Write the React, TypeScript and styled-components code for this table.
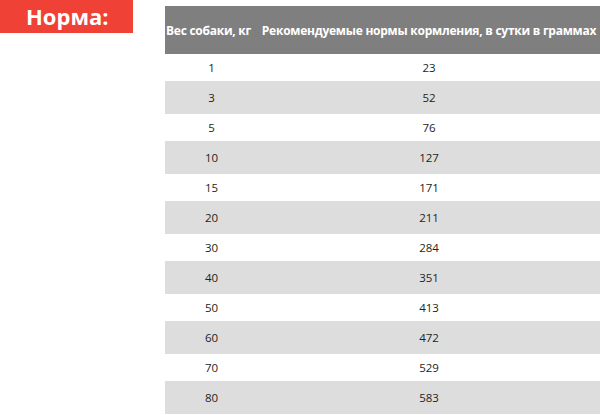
import styled, { createGlobalStyle } from "styled-components";

const GlobalStyle = createGlobalStyle`
  html, body {
    margin: 0;
    padding: 0;
    background: #ffffff;
  }
  body {
    font-family: "Open Sans", "Noto Sans", Arial, sans-serif;
  }
`;

const Page = styled.div`
  display: flex;
  align-items: flex-start;
  width: 600px;
  height: 415px;
  overflow: hidden;
`;

const Banner = styled.div`
  width: 133px;
  height: 33px;
  flex-shrink: 0;
  background: #ef4136;
  color: #ffffff;
  font-family: "Open Sans", Arial, sans-serif;
  font-weight: 700;
  font-size: 22px;
  line-height: 33px;
  padding-left: 26px;
  box-sizing: border-box;
`;

const Table = styled.table`
  margin-left: 32px;
  margin-top: 6px;
  width: 435px;
  border-collapse: collapse;
  table-layout: fixed;
  font-size: 11.5px;
`;

const HeadCell = styled.th<{ $first?: boolean }>`
  background: #7f7f7f;
  color: #ffffff;
  font-weight: 700;
  font-size: 12px;
  height: 48px;
  padding: ${(p) => (p.$first ? "0 0 0 1px" : "0")};
  text-align: ${(p) => (p.$first ? "left" : "center")};
  white-space: nowrap;
  letter-spacing: -0.25px;
  width: ${(p) => (p.$first ? "92px" : "auto")};
`;

const Row = styled.tr<{ $shaded: boolean }>`
  background: ${(p) => (p.$shaded ? "#dddddd" : "#ffffff")};
  height: ${(p) => (p.$shaded ? "33px" : "27px")};
`;

const Cell = styled.td`
  text-align: center;
  color: #231f20;
  padding: 0;
`;

const rows = [
  [1, 23],
  [3, 52],
  [5, 76],
  [10, 127],
  [15, 171],
  [20, 211],
  [30, 284],
  [40, 351],
  [50, 413],
  [60, 472],
  [70, 529],
  [80, 583],
];

export default function App() {
  return (
    <>
      <GlobalStyle />
      <Page>
        <Banner>Норма:</Banner>
        <Table>
          <thead>
            <tr>
              <HeadCell $first>Вес собаки, кг</HeadCell>
              <HeadCell>Рекомендуемые нормы кормления, в сутки в граммах</HeadCell>
            </tr>
          </thead>
          <tbody>
            {rows.map(([w, g], i) => (
              <Row key={w} $shaded={i % 2 === 1}>
                <Cell>{w}</Cell>
                <Cell>{g}</Cell>
              </Row>
            ))}
          </tbody>
        </Table>
      </Page>
    </>
  );
}
